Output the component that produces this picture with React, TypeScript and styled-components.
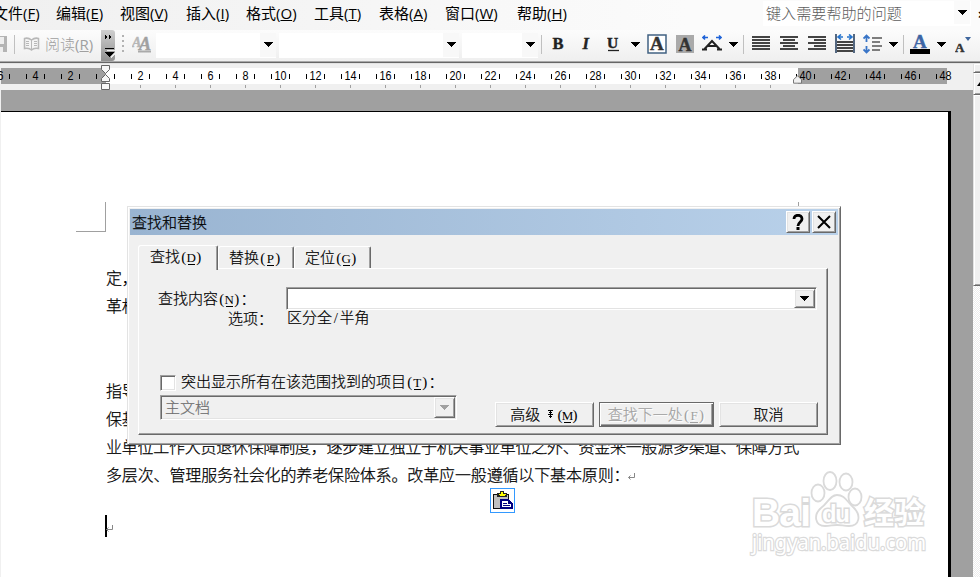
import React from 'react';
import styled, { createGlobalStyle } from 'styled-components';

const Global = createGlobalStyle`
  *{box-sizing:border-box}
  body{margin:0;background:#f0f0f0;overflow:hidden;color:#000}
  #root{width:980px;height:577px;overflow:hidden}
  svg{display:block;flex:none}
`;
const sans = `"Noto Sans CJK SC", sans-serif`;
const Screen = styled.div`position:relative;width:980px;height:577px;overflow:hidden;display:flex;flex-direction:column;font-family:${sans};`;

const MenuBar = styled.div`height:30px;display:flex;background:linear-gradient(90deg,#f0f0f0,#fbfbfb 70%);flex:none;`;
const MenuItem = styled.div<{ $w: number; $shift?: number }>`width:${p => p.$w}px;flex:none;font-size:15px;line-height:25px;white-space:nowrap;margin-left:${p => p.$shift || 0}px;`;
const Latin = styled.span`font-family:"Open Sans","Noto Sans",sans-serif;font-size:15px;font-weight:400;`;
const HelpBox = styled.div`margin-left:auto;margin-right:9px;margin-top:1px;width:208px;height:25px;flex:none;background:#fff;color:#5d5d5d;font-size:15.1px;line-height:21px;padding:0 3px 2px;display:flex;justify-content:space-between;align-items:center;font-weight:300;`;
const HelpCaret = styled.div`width:16px;height:23px;margin-right:-2px;background:#fafafa;display:flex;align-items:center;justify-content:center;`;
const CloseMark = styled.div`position:absolute;left:978px;top:7px;font:bold 13px "Liberation Sans",sans-serif;`;

const ToolBar = styled.div`height:31px;flex:none;display:flex;align-items:center;background:linear-gradient(#fcfcfc,#efefef);`;
const Slot = styled.div<{ $w: number }>`width:${p => p.$w}px;height:31px;flex:none;display:flex;align-items:center;padding-bottom:3px;`;
const ReadLabel = styled.div`width:56px;color:#a0a0a0;font-size:15px;line-height:28px;padding-bottom:3px;white-space:nowrap;flex:none;font-weight:300;`;
const Overflow = styled.div`width:14px;height:31px;margin-right:7px;border-radius:0 3px 3px 0;background:linear-gradient(#cfcfcf,#919191);flex:none;`;
const Sep = styled.div<{ $w: number }>`width:${p => p.$w}px;height:19px;border-left:1px solid #c0c0c0;flex:none;margin-bottom:2px;`;
const FontCombo = styled.div<{ $w: number }>`width:${p => p.$w}px;height:25px;margin-right:3px;margin-bottom:1px;background:#fff;display:flex;justify-content:flex-end;flex:none;`;
const ComboCaret = styled.div`width:16px;height:24px;background:#f8f8f8;display:flex;align-items:center;justify-content:center;`;
const ToolEdge = styled.div`height:3px;background:linear-gradient(#a9a9a9 0 1px,#666 1px 2px,#e3e3e3 2px);flex:none;`;

const Ruler = styled.div`height:26px;padding-top:4px;background:#f0f0f0;flex:none;position:relative;`;
const RulerBand = styled.div`height:16px;width:946px;margin-left:1px;background:linear-gradient(90deg,#a0a0a0 0 105px,#fff 105px 797px,#a0a0a0 797px);`;
const Scale = styled.div`height:16px;display:flex;width:970px;margin-left:-18px;`;
const Mark = styled.div`width:35px;height:16px;flex:none;display:flex;align-items:center;justify-content:center;font:13px/16px "Liberation Sans",Arial,sans-serif;`;
const Tick = styled.i<{ $hide?: boolean }>`width:1px;height:5px;background:${p => (p.$hide ? 'transparent' : '#000')};`;
const Num = styled.span`width:17px;text-align:center;display:flex;justify-content:center;transform:scaleX(.83);`;
const TabTicks = styled.div`height:3px;margin-top:1px;margin-left:140px;width:631px;background:repeating-linear-gradient(90deg,#a0a0a0 0 1px,transparent 1px 35px);`;
const Indent = styled.svg<{ $x: number; $y: number }>`position:absolute;left:${p => p.$x}px;top:${p => p.$y}px;`;

const Work = styled.div`flex:1;display:flex;min-height:0;background:#a0a0a0;padding-top:21px;border-left:1px solid #f0f0f0;`;
const Paper = styled.div`width:950px;flex:none;background:#fff;border-top:1px solid #000;border-right:3px solid #000;padding-left:105px;`;
const TopMargin = styled.div`height:151px;display:flex;justify-content:space-between;padding-top:90px;margin-left:-30px;width:723px;`;
const Corner = styled.div`width:30px;height:30px;border-right:1px solid #a0a0a0;border-bottom:1px solid #a0a0a0;`;
const CornerRight = styled.div`width:1px;height:30px;background:#a0a0a0;`;
const Line = styled.div<{ $gap?: number; $track?: number }>`height:28px;margin-top:${p => p.$gap || 0}px;line-height:28px;font-size:16px;letter-spacing:${p => p.$track ?? -0.25}px;font-weight:300;-webkit-text-stroke:.25px #000;white-space:nowrap;display:flex;align-items:center;`;
const Caret = styled.div`width:2px;height:22px;background:#000;margin-left:-1px;`;
const ReturnMark = styled.svg`margin:5px 0 0 -2px;`;

const Scroll = styled.div`position:absolute;left:973px;top:64px;width:7px;height:513px;display:flex;flex-direction:column;background:repeating-conic-gradient(#fff 0 25%,#ececec 0 50%) 0 0/2px 2px;`;
const ScrollPiece = styled.div<{ $h: number }>`height:${p => p.$h}px;flex:none;border-left:1px solid #e3e3e3;border-bottom:1px solid #696969;box-shadow:inset 1px 1px #fff,inset 0 -1px #a0a0a0;background:#f0f0f0;display:flex;align-items:center;justify-content:flex-end;`;

const Dialog = styled.div`position:absolute;left:127px;top:206px;width:714px;height:239px;background:#f0f0f0;border:1px solid;border-color:#e3e3e3 #696969 #696969 #e3e3e3;box-shadow:inset 1px 1px #fff,inset -1px -1px #a0a0a0;padding:2px;`;
const Title = styled.div`height:26px;background:linear-gradient(90deg,#99b4d1,#b9d1ea);display:flex;align-items:center;padding:0 2px;font-size:15px;`;
const TitleText = styled.span`line-height:22px;margin-bottom:1px;-webkit-text-stroke:.25px #000;font-weight:300;`;
const TitleButtons = styled.div`margin-left:auto;display:flex;gap:2px;`;
const raised = `border:1px solid;border-color:#fff #696969 #696969 #fff;box-shadow:inset 1px 1px #e3e3e3,inset -1px -1px #a0a0a0;background:#f0f0f0;`;
const WinButton = styled.div`width:24px;height:22px;display:flex;align-items:center;justify-content:center;${raised}`;
const Tabs = styled.div`display:flex;align-items:flex-end;height:25px;margin:9px 0 -1px 8px;position:relative;`;
const Tab = styled.div<{ $w: number; $active?: boolean }>`
  width:${p => p.$w}px;height:${p => (p.$active ? 25 : 22)}px;margin-bottom:${p => (p.$active ? -1 : 1)}px;
  background:#f0f0f0;border:1px solid #fff;border-right:1px solid #696969;box-shadow:inset -1px 0 #a0a0a0;border-bottom:0;border-radius:3px 2px 0 0;
  padding-left:${p => (p.$active ? 11 : 10)}px;font-size:15px;line-height:${p => (p.$active ? 20 : 19)}px;font-weight:300;-webkit-text-stroke:.2px #000;white-space:nowrap;`;
const Panel = styled.div`width:690px;height:167px;margin-left:8px;border:1px solid;border-color:#fff #696969 #696969 #fff;box-shadow:inset -1px -1px #a0a0a0;font-size:15px;font-weight:300;-webkit-text-stroke:.2px currentColor;`;
const Half = styled.span`display:inline-block;width:7.5px;text-align:center;font-family:"Liberation Serif",serif;font-size:15px;line-height:14px;font-weight:400;-webkit-text-stroke:0;`;
const Key = styled(Half)`display:inline-flex;justify-content:center;border-bottom:1px solid currentColor;font-size:13px;line-height:12px;`;
const Row = styled.div<{ $top?: number; $left: number; $h: number }>`margin-top:${p => p.$top || 0}px;padding-left:${p => p.$left}px;height:${p => p.$h}px;display:flex;align-items:center;line-height:${p => p.$h - 2}px;white-space:nowrap;`;
const Label = styled.div<{ $w?: number }>`${p => p.$w && `width:${p.$w}px;`}flex:none;padding-bottom:3px;`;
const Field = styled.div<{ $w: number; $h: number; $off?: boolean }>`width:${p => p.$w}px;height:${p => p.$h}px;flex:none;display:flex;justify-content:space-between;align-items:center;border:1px solid;border-color:#a0a0a0 #fff #fff #a0a0a0;box-shadow:inset 1px 1px #696969,inset -1px -1px #e3e3e3;background:${p => (p.$off ? '#f0f0f0' : '#fff')};color:#6d6d6d;padding:1px 1px 1px 4px;`;
const FieldText = styled.span`line-height:18px;padding-bottom:2px;`;
const DropButton = styled.div`width:21px;height:100%;display:flex;align-items:center;justify-content:center;${raised}`;
const Check = styled.div`width:16px;height:16px;margin-right:5px;background:#fff;border:1px solid;border-color:#a0a0a0 #fff #fff #a0a0a0;box-shadow:inset 1px 1px #696969,inset -1px -1px #e3e3e3;`;
const BottomRow = styled.div`display:flex;align-items:flex-start;margin:3px 0 0 21px;`;
const Buttons = styled.div`display:flex;margin:7px 0 0 38px;gap:5px;`;
const Button = styled.div<{ $w: number; $off?: boolean }>`width:${p => p.$w}px;height:25px;display:flex;align-items:center;justify-content:center;font-size:15px;line-height:21px;padding-bottom:3px;${raised}
  ${p => p.$off && 'border-color:#696969;box-shadow:inset 1px 1px #fff,inset -1px -1px #696969,inset -2px -2px #a0a0a0;color:#a0a0a0;text-shadow:1px 1px #fff;'}`;
const MoreIcon = styled.svg`margin:2px 2px 0 7px;`;

const PasteTag = styled.div`position:absolute;left:490px;top:488px;width:25px;height:25px;border:1px solid #3399ff;background:#fff;display:flex;align-items:center;justify-content:center;`;
const Watermark = styled.svg`position:absolute;left:748px;top:468px;`;

const Down = ({ w = 9, h = 5, c = '#000' }: { w?: number; h?: number; c?: string }) => (
  <svg width={w} height={h} viewBox="0 0 9 5" preserveAspectRatio="none" shapeRendering="crispEdges"><path d="M0 0h9L4.5 5z" fill={c} /></svg>
);
const K = ({ k }: { k: string }) => <span><Half>(</Half><Key>{k}</Key><Half>)</Half></span>;
const Return = () => (
  <ReturnMark width="9" height="9" viewBox="0 0 9 9" fill="none" stroke="#888"><path d="M7.5 1v4.5H1.5M3.5 3.5l-2 2 2 2" /></ReturnMark>
);
const Lines = ({ rows }: { rows: number[][] }) => (
  <svg width="18" height="16" shapeRendering="crispEdges">{rows.map(([x, w], i) => <rect key={i} x={x} y={i * 3} width={w} height="2" fill="#444" />)}</svg>
);
const Glyph = ({ ch, x = 0, y = 15, size = 18, color = '#222', italic = false }: { ch: string; x?: number; y?: number; size?: number; color?: string; italic?: boolean }) => (
  <text x={x} y={y} fontFamily='"Liberation Serif", serif' fontSize={size} fontWeight="700" fill={color} stroke={color} strokeWidth=".4" fontStyle={italic ? 'italic' : 'normal'}>{ch}</text>
);

const menus: [string, string, number][] = [
  ['文件', 'F', 63], ['编辑', 'E', 64], ['视图', 'V', 66], ['插入', 'I', 60], ['格式', 'O', 68],
  ['工具', 'T', 65], ['表格', 'A', 66], ['窗口', 'W', 72], ['帮助', 'H', 60],
];
const marks = ['6', '4', '2', '', ...Array.from({ length: 24 }, (_, i) => String((i + 1) * 2))];

export default function App() {
  return (
    <Screen>
      <Global />
      <MenuBar>
        {menus.map(([t, k, w], i) => (
          <MenuItem key={k} $w={w} $shift={i ? 0 : -7}>{t}<Latin>(<u>{k}</u>)</Latin></MenuItem>
        ))}
        <HelpBox>键入需要帮助的问题<HelpCaret><Down /></HelpCaret></HelpBox>
      </MenuBar>
      <CloseMark>×</CloseMark>

      <ToolBar>
        <Slot $w={14}>
          <svg width="8" height="18"><path d="M0 1h7v16H0z" fill="#b4b4b4" /><path d="M0 2h4v7H0zM0 12h3v5H0z" fill="#eee" /></svg>
        </Slot>
        <Sep $w={9} />
        <Slot $w={22}>
          <svg width="17" height="15" fill="#f4f4f4" stroke="#b8b8b8"><path d="M8.500 3C6 1 3 1 1.500 1.500v10C4 11 6.500 11 8.500 13c2-2 4.500-2 7-1.500v-10C14 1 11 1 8.500 3z" strokeWidth="1.500" /><path d="M8.500 3v10M3 4.500h3M3 6.500h3M3 8.500h3M11 4.500h3M11 6.500h3M11 8.500h3" /></svg>
        </Slot>
        <ReadLabel>阅读<Latin>(<u>R</u>)</Latin></ReadLabel>
        <Overflow>
          <svg width="14" height="31" shapeRendering="crispEdges"><path d="M4 5l2 2-2 2zM8 5l2 2-2 2zM4 18h9v1H4zM4 22h9l-4.500 5z" /><path d="M6 20h8v1H6zM9 27l5-5v2l-4 4z" fill="#eee" /></svg>
        </Overflow>
        <Slot $w={10}><svg width="2" height="18" fill="#b2b2b2"><path d="M0 0h2v2H0zM0 5h2v2H0zM0 10h2v2H0zM0 15h2v2H0z" /></svg></Slot>
        <Slot $w={24}>
          <svg width="20" height="20"><Glyph ch="A" x={0} y={13} size={14} color="#b6b6b6" italic /><Glyph ch="A" x={7} y={16} size={18} color="#a0a0a0" italic /><path d="M6 17.500h13" stroke="#aaa" strokeWidth="2" /></svg>
        </Slot>
        <FontCombo $w={120}><ComboCaret><Down /></ComboCaret></FontCombo>
        <FontCombo $w={180}><ComboCaret><Down /></ComboCaret></FontCombo>
        <FontCombo $w={76}><ComboCaret><Down /></ComboCaret></FontCombo>
        <Sep $w={11} />
        <Slot $w={28}><svg width="14" height="17"><Glyph ch="B" x={0.6} y={13} size={16.5} /></svg></Slot>
        <Slot $w={27}><svg width="14" height="17"><Glyph ch="I" x={2.5} y={13} size={16.5} italic /></svg></Slot>
        <Slot $w={24}><svg width="14" height="17"><Glyph ch="U" y={12} size={15.5} /><path d="M1 14.500h11" stroke="#222" strokeWidth="1.300" /></svg></Slot>
        <Slot $w={16}><Down /></Slot>
        <Slot $w={29}><svg width="20" height="20"><rect x="1" y="1" width="18" height="18" fill="#fff" stroke="#416282" strokeWidth="1.500" /><Glyph ch="A" x={3} y={16} size={19} color="#333" /></svg></Slot>
        <Slot $w={26}><svg width="18" height="18"><rect width="18" height="18" fill="#aaa" /><Glyph ch="A" x={2.5} y={15.5} size={18} color="#333" /></svg></Slot>
        <Slot $w={27}>
          <svg width="20" height="18" fill="none"><path d="M0 14.500h5M15 14.500h5M2.500 14L10 6l7.500 8M6 11h8" stroke="#222" strokeWidth="2" /><path d="M1 2.500h5M3 .5l-2 2 2 2M14 2.500h5M17 .5l2 2-2 2" stroke="#1f63d8" strokeWidth="1.600" /></svg>
        </Slot>
        <Slot $w={14}><Down /></Slot>
        <Sep $w={9} />
        <Slot $w={28}><Lines rows={[[0, 18], [0, 18], [0, 18], [0, 18], [0, 18]]} /></Slot>
        <Slot $w={28}><Lines rows={[[0, 18], [3, 12], [0, 18], [3, 12], [0, 18]]} /></Slot>
        <Slot $w={27}><Lines rows={[[0, 18], [6, 12], [0, 18], [6, 12], [0, 18]]} /></Slot>
        <Slot $w={28}>
          <svg width="20" height="20" fill="none"><path d="M1 0v19M19 0v19" stroke="#536780" strokeWidth="2" /><path d="M3 3h5M12 3h5M6 .5L3 3l3 2.500M14 .5L17 3l-3 2.500" stroke="#2573cc" strokeWidth="1.600" /><path d="M2 8h16M2 11h16M2 14h16M2 17h16" stroke="#444" strokeWidth="2" /></svg>
        </Slot>
        <Slot $w={26}>
          <svg width="20" height="20" fill="none"><path d="M3.500 1v7M3.500 12v7M.5 4.500l3-3 3 3M.5 15.500l3 3 3-3" stroke="#3975c7" strokeWidth="1.800" /><path d="M9 4h10M9 8h8M9 12h10M9 16h8" stroke="#555" strokeWidth="1.600" /></svg>
        </Slot>
        <Slot $w={14}><Down /></Slot>
        <Sep $w={7} />
        <Slot $w={27}><svg width="20" height="20"><Glyph ch="A" x={3} y={13.5} size={19} color="#3d65a5" /><path d="M0 15h20v5H0z" /></svg></Slot>
        <Slot $w={18}><Down /></Slot>
        <Slot $w={20}><svg width="17" height="18"><Glyph ch="A" x={0} y={16.5} size={13} color="#333" /><path d="M10 2h6l-3 4z" fill="#40679e" /></svg></Slot>
      </ToolBar>
      <ToolEdge />

      <Ruler>
        <RulerBand>
          <Scale>
            {marks.map((m, i) => (
              <Mark key={i}><Tick /><Num>{m}</Num><Tick $hide={i === marks.length - 1} /></Mark>
            ))}
          </Scale>
        </RulerBand>
        <TabTicks />
        <Indent $x={101} $y={1} width="9" height="25" fill="#f7f7f7" stroke="#666"><path d="M.5 .5h8v4l-4 4-4-4zM4.500 9.500l4 4v3h-8v-3zM.5 18.500h8v6h-8z" /></Indent>
        <Indent $x={793} $y={11} width="9" height="9" fill="#f0f0f0" stroke="#777"><path d="M4.500 .7l4 4v3.500h-8V4.700z" /></Indent>
      </Ruler>

      <Work>
        <Paper>
          <TopMargin><Corner /><CornerRight /></TopMargin>
          <Line>定，</Line>
          <Line>革机</Line>
          <Line $gap={57}>指导</Line>
          <Line>保基</Line>
          <Line>业单位工作人员退休保障制度，逐步建立独立于机关事业单位之外、资金来一般源多渠道、保障方式</Line>
          <Line $track={-0.14}>多层次、管理服务社会化的养老保险体系。改革应一般遵循以下基本原则：<Return /></Line>
          <Line $gap={24}><Caret /><Return /></Line>
        </Paper>
      </Work>

      <Scroll>
        <ScrollPiece $h={9} />
        <ScrollPiece $h={22}><svg width="3" height="4"><path d="M3 0v4H0z" /></svg></ScrollPiece>
        <ScrollPiece $h={191} />
      </Scroll>

      <Watermark width="182" height="92" fill="#fff" stroke="#dadada" strokeWidth="1.800">
        <ellipse cx="82" cy="13" rx="6.500" ry="9" /><ellipse cx="98" cy="14" rx="6.500" ry="8.500" />
        <ellipse cx="70" cy="25" rx="6.500" ry="8.500" /><ellipse cx="107" cy="29" rx="6.500" ry="8.500" />
        <path d="M89 27c-7 0-9 8-16 13-8 7-6 18 4 18 5 0 8-1 12-1s7 1 12 1c11 0 12-11 5-18-7-6-9-13-17-13z" />
        <g fontFamily='"Liberation Sans", Arial, sans-serif' fontWeight="700" paintOrder="stroke" strokeWidth="3">
          <text x="4" y="58" fontSize="39" textLength="59">Bai</text>
          <text x="74" y="54" fontSize="24" textLength="28">du</text>
        </g>
        <text x="116" y="55" fontSize="30" fontWeight="700" fontFamily='"Noto Sans CJK SC", sans-serif' textLength="60" paintOrder="stroke" strokeWidth="3">经验</text>
        <text x="4" y="82" fontSize="21" fontFamily='"Noto Sans", sans-serif' textLength="174" lengthAdjust="spacingAndGlyphs" paintOrder="stroke" strokeWidth="2.400">jingyan.baidu.com</text>
      </Watermark>

      <PasteTag>
        <svg width="21" height="19" shapeRendering="crispEdges"><path d="M1 3h16v15H1z" fill="#111" /><path d="M2 4h14v13H2z" fill="#c0c0c0" /><path d="M5 2h3V0h4v2h3v4H5z" fill="#222" /><path d="M6 3h3V1h2v2h3v1l-2 1H8z" fill="#ff0" /><path d="M8 8h8l5 5v5H8z" fill="#000080" /><path d="M10 10h6v3h3v3h-9z" fill="#fff" /><path d="M11 12h4M11 14.500h7" stroke="#000080" /></svg>
      </PasteTag>

      <Dialog>
        <Title>
          <TitleText>查找和替换</TitleText>
          <TitleButtons>
            <WinButton><svg width="12" height="17" fill="none" stroke="#000" strokeWidth="2.800"><path d="M2 5c0-5 8-5 8 0 0 3-4 3-4 7M4.500 14.500h3" /></svg></WinButton>
            <WinButton><svg width="14" height="14" stroke="#000" strokeWidth="2"><path d="M1 1l12 12M13 1L1 13" /></svg></WinButton>
          </TitleButtons>
        </Title>
        <Tabs>
          <Tab $w={80} $active>查找<K k="D" /></Tab>
          <Tab $w={76}>替换<K k="P" /></Tab>
          <Tab $w={77}>定位<K k="G" /></Tab>
        </Tabs>
        <Panel>
          <Row $top={18} $left={19} $h={23}>
            <Label $w={128}>查找内容<K k="N" />：</Label>
            <Field $w={531} $h={23}><span /><DropButton><Down /></DropButton></Field>
          </Row>
          <Row $left={89} $h={17}><Label $w={59}>选项：</Label><Label>区分全<Half>/</Half>半角</Label></Row>
          <Row $top={47} $left={21} $h={18}><Check /><Label>突出显示所有在该范围找到的项目<K k="T" />：</Label></Row>
          <BottomRow>
            <Field $w={297} $h={25} $off><FieldText>主文档</FieldText><DropButton><Down c="#a0a0a0" /></DropButton></Field>
            <Buttons>
              <Button $w={99}>高级<MoreIcon width="7" height="8" shapeRendering="crispEdges"><path d="M1 0h5v1H4v1h2L3.500 4 1 2h2V1H1zM1 4h5v1H4v1h2L3.500 8 1 6h2V5H1z" /></MoreIcon><K k="M" /></Button>
              <Button $w={115} $off><span>查找下一处<K k="F" /></span></Button>
              <Button $w={99}>取消</Button>
            </Buttons>
          </BottomRow>
        </Panel>
      </Dialog>
    </Screen>
  );
}
